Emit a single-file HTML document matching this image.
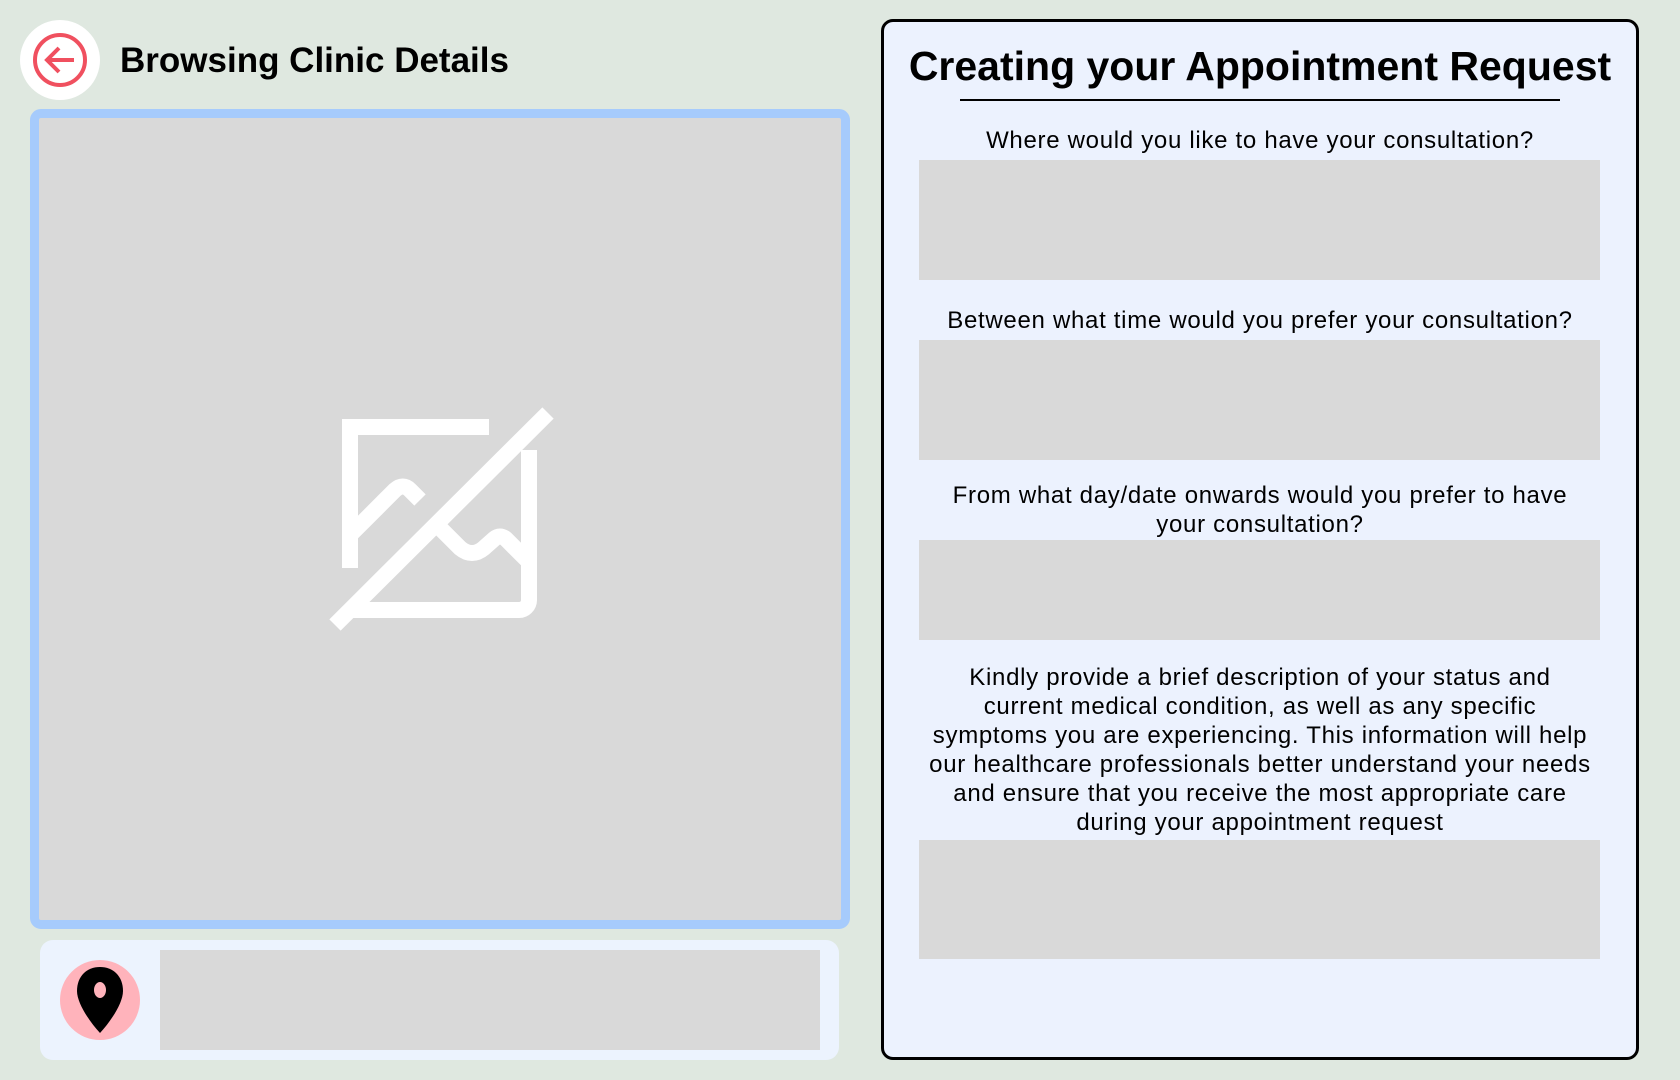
<!DOCTYPE html>
<html><head><style>
body{margin:0;width:1680px;height:1080px;background:#dfe8e0;font-family:"Liberation Sans",sans-serif;position:relative;overflow:hidden}
.a{position:absolute}
.g{position:absolute;background:#d9d9d9}
.l{position:absolute;left:881px;width:758px;text-align:center;font-size:24px;letter-spacing:0.7px;line-height:29px;color:#000;white-space:nowrap}
</style></head><body>
<div class="a" style="left:20px;top:20px;width:80px;height:80px;border-radius:50%;background:#fff"></div>
<svg class="a" style="left:30px;top:30px" width="60" height="60" viewBox="0 0 60 60" fill="none" stroke="#f0505f" stroke-width="4"><circle cx="30" cy="30" r="25"/><path d="M44 30H18M29 18L17 30L29 42"/></svg>
<div class="a" style="left:120px;top:41px;font-size:35px;font-weight:bold">Browsing Clinic Details</div>
<div class="a" style="left:30px;top:109px;width:802px;height:802px;border:9px solid #a6cbfc;border-radius:11px;background:#d9d9d9"></div>
<svg class="a" style="left:0;top:0" width="1680" height="1080" fill="none" stroke="#fff" stroke-width="16"><path d="M350 568V427H489M529 450V600a10 10 0 0 1-10 10H350"/><path d="M335 625L548 413"/><path d="M350 535L395 490q8-7 15 0l10 10"/><path d="M440 528l20 20q12 10 24 0l10-9q6-5 12 0l23 23"/></svg>
<div class="a" style="left:40px;top:940px;width:799px;height:120px;border-radius:13px;background:#ecf3fe"></div>
<div class="g" style="left:160px;top:950px;width:660px;height:100px"></div>
<div class="a" style="left:60px;top:960px;width:80px;height:80px;border-radius:50%;background:#ffb3bb"></div>
<svg class="a" style="left:75px;top:965px" width="50" height="70" viewBox="0 0 50 70"><path d="M25 2C12 2 2 11 2 26c0 12 12 30 23 42C36 56 48 38 48 26 48 11 38 2 25 2z" fill="#000"/><ellipse cx="25" cy="25" rx="6" ry="8" fill="#ffb3bb"/></svg>
<div class="a" style="left:881px;top:19px;width:752px;height:1035px;border:3px solid #000;border-radius:12px;background:#ecf2fe"></div>
<div class="a" style="left:881px;top:43px;width:758px;text-align:center;font-size:41px;font-weight:bold">Creating your Appointment Request</div>
<div class="a" style="left:960px;top:99px;width:600px;height:2px;background:#000"></div>
<div class="l" style="top:126px">Where would you like to have your consultation?</div>
<div class="g" style="left:919px;top:160px;width:681px;height:120px"></div>
<div class="l" style="top:306px">Between what time would you prefer your consultation?</div>
<div class="g" style="left:919px;top:340px;width:681px;height:120px"></div>
<div class="l" style="top:481px">From what day/date onwards would you prefer to have<br>your consultation?</div>
<div class="g" style="left:919px;top:540px;width:681px;height:100px"></div>
<div class="l" style="top:663px">Kindly provide a brief description of your status and<br>current medical condition, as well as any specific<br>symptoms you are experiencing. This information will help<br>our healthcare professionals better understand your needs<br>and ensure that you receive the most appropriate care<br>during your appointment request</div>
<div class="g" style="left:919px;top:840px;width:681px;height:119px"></div>
</body></html>
